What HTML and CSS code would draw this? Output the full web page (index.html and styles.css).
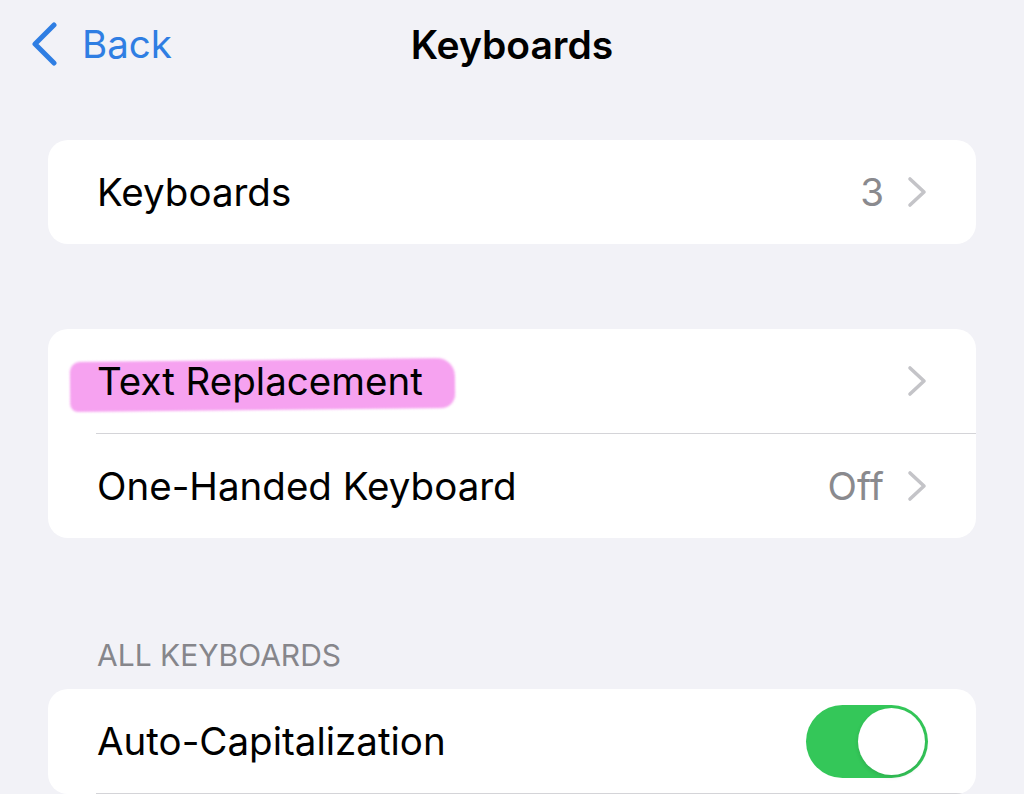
FILE: index.html
```html
<!DOCTYPE html>
<html>
<head>
<meta charset="utf-8">
<link rel="stylesheet" href="styles.css">
</head>
<body>
<header class="nav">
  <div class="back">
    <svg class="back-chev" width="30" height="44" viewBox="0 0 30 44"><path d="M24 3 L5 22 L24 41" fill="none" stroke="#2f7ee3" stroke-width="5" stroke-linecap="round" stroke-linejoin="round"/></svg>
    <span class="back-label">Back</span>
  </div>
  <div class="title">Keyboards</div>
</header>
<main class="content">
  <section class="card">
    <div class="row">
      <span class="label">Keyboards</span>
      <span class="trail"><span class="value">3</span><svg class="chev" width="22" height="32" viewBox="0 0 22 32"><path d="M4 3 L18 16 L4 29" fill="none" stroke="#c4c4c8" stroke-width="3.6" stroke-linecap="round" stroke-linejoin="round"/></svg></span>
    </div>
  </section>

  <section class="card group2">
    <div class="row">
      <span class="label marked">Text Replacement</span>
      <span class="trail"><svg class="chev" width="22" height="32" viewBox="0 0 22 32"><path d="M4 3 L18 16 L4 29" fill="none" stroke="#c4c4c8" stroke-width="3.6" stroke-linecap="round" stroke-linejoin="round"/></svg></span>
    </div>
    <div class="sep"></div>
    <div class="row">
      <span class="label">One-Handed Keyboard</span>
      <span class="trail"><span class="value">Off</span><svg class="chev" width="22" height="32" viewBox="0 0 22 32"><path d="M4 3 L18 16 L4 29" fill="none" stroke="#c4c4c8" stroke-width="3.6" stroke-linecap="round" stroke-linejoin="round"/></svg></span>
    </div>
  </section>

  <div class="section-head">ALL KEYBOARDS</div>
  <section class="card">
    <div class="row">
      <span class="label">Auto-Capitalization</span>
      <span class="toggle"><span class="knob"></span></span>
    </div>
    <div class="sep"></div>
  </section>
</main>
</body>
</html>
```

FILE: styles.css
```css
html, body {
  margin: 0;
  padding: 0;
}
body {
  width: 1024px;
  height: 794px;
  overflow: hidden;
  background: #f2f2f7;
  font-family: Inter, "Noto Sans", "Liberation Sans", sans-serif;
  color: #000;
}
.nav {
  position: relative;
  height: 90px;
  display: flex;
  align-items: center;
}
.back {
  display: flex;
  align-items: center;
  padding-left: 30px;
  gap: 22px;
  margin-top: -2px;
}
.back-chev {
  display: block;
}
.back-label {
  font-size: 38.5px;
  color: #2f7ee3;
}
.title {
  position: absolute;
  left: 0;
  right: 0;
  top: 21px;
  text-align: center;
  font-size: 39px;
  font-weight: 600;
}
.content {
  padding: 50px 48px 0;
}
.card {
  background: #fff;
  border-radius: 20px;
  overflow: hidden;
}
.group2 {
  margin-top: 85px;
}
.row {
  height: 104px;
  display: flex;
  align-items: center;
  justify-content: space-between;
  padding: 0 48px 0 49px;
}
.label {
  font-size: 38.5px;
  position: relative;
  z-index: 0;
}
.marked::before {
  content: "";
  position: absolute;
  left: -27px;
  right: -32px;
  top: 2px;
  bottom: -6px;
  background: #f6a2f0;
  border-radius: 10px 18px 14px 8px;
  transform: rotate(-0.6deg);
  filter: blur(1px);
  z-index: -1;
}
.trail {
  display: flex;
  align-items: center;
  gap: 22px;
}
.value {
  font-size: 38.5px;
  color: #8a8a8e;
}
.chev {
  display: block;
}
.sep {
  height: 1px;
  background: #d4d4d8;
  margin-left: 48px;
}
.section-head {
  margin: 99px 0 0 49px;
  height: 52px;
  font-size: 30px;
  color: #86868b;
}
.toggle {
  width: 122px;
  height: 73px;
  border-radius: 37px;
  background: #34c759;
  position: relative;
  display: block;
}
.knob {
  position: absolute;
  right: 3px;
  top: 3px;
  width: 67px;
  height: 67px;
  border-radius: 50%;
  background: #fff;
  box-shadow: 0 2px 4px rgba(0,0,0,0.12);
}
```
